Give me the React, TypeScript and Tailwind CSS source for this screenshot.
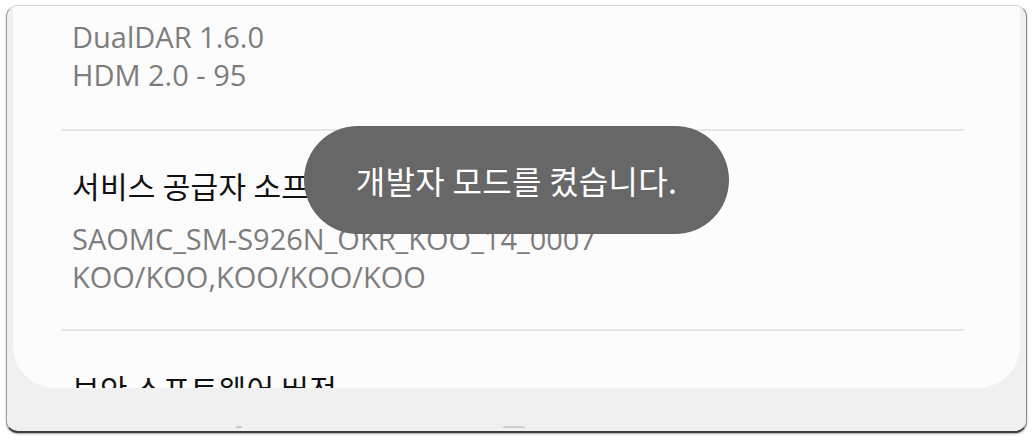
import React from 'react';

const latin = { fontFamily: '"Open Sans", "Noto Sans CJK KR", sans-serif' };
const korean = { fontFamily: '"Noto Sans CJK KR", "Open Sans", sans-serif' };

const App: React.FC = () => {
  return (
    <div className="w-[1032px] h-[441px] bg-white pt-[5px] pl-[6px]" style={latin}>
      <div className="relative w-[1021px] h-[428px] rounded-[12px] border border-[#d6d6d6] border-l-[#a3a3a3] border-r-[#8c8c8c] border-b-2 border-b-[#3d3d3d] bg-[#f0f0f0] overflow-hidden shadow-[0_1px_2px_rgba(0,0,0,0.35)]">
        {/* settings card */}
        <div className="mx-[6px] h-[382px] rounded-b-[42px] bg-[#fcfcfc] overflow-hidden">
          <div className="pl-[48px] pr-[56px] pt-[12px]">
            <div className="pl-[11px] text-[29px] leading-[38px] text-[#7d7d7d] tracking-[0px]">
              <div>DualDAR 1.6.0</div>
              <div>HDM 2.0 - 95</div>
            </div>
            <div className="mt-[35px] h-[2px] bg-[#e6e6e6]" />
            <div className="pl-[11px] pt-[34px]">
              <div className="text-[30px] leading-[40px] text-[#111111] tracking-[0.3px]" style={korean}>서비스 공급자 소프트웨어 버전</div>
              <div className="mt-[15px] text-[29px] leading-[38px] text-[#7d7d7d] tracking-[0px]">
                <div>SAOMC_SM-S926N_OKR_KOO_14_0007</div>
                <div>KOO/KOO,KOO/KOO/KOO</div>
              </div>
            </div>
            <div className="mt-[33px] h-[2px] bg-[#e6e6e6]" />
            <div className="pl-[11px] pt-[37px] text-[30px] leading-[40px] text-[#111111] tracking-[0.3px]" style={korean}>보안 소프트웨어 버전</div>
          </div>
        </div>
        {/* nav bar remnants */}
        <div className="flex items-end h-[43px] pb-[3px]">
          <div className="ml-[229px] w-[6px] h-[2px] bg-[#c8c8c8] rounded-full" />
          <div className="ml-[261px] w-[22px] h-[2px] bg-[#cfcfcf] rounded-full" />
        </div>
        {/* toast */}
        <div className="absolute left-[297px] top-[120px] w-[425px] h-[108px] rounded-full bg-[#676768] flex items-center justify-center">
          <span className="text-white text-[32px] leading-[40px] tracking-[0.3px]" style={korean}>개발자 모드를 켰습니다.</span>
        </div>
      </div>
    </div>
  );
};

export default App;
